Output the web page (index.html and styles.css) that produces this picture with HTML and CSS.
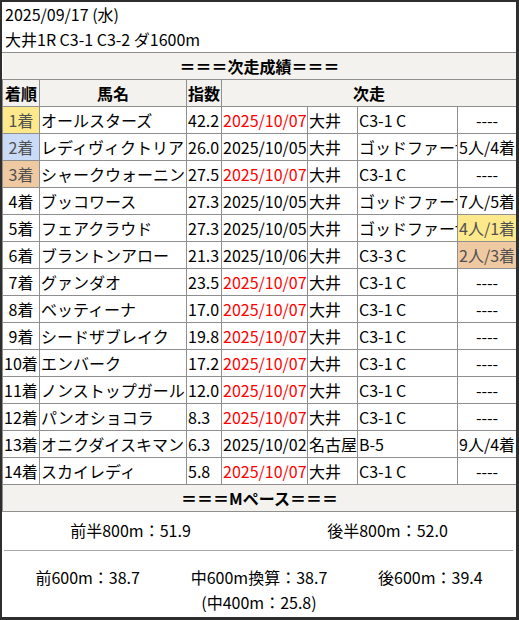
FILE: index.html
```html
<!DOCTYPE html>
<html lang="ja">
<head>
<meta charset="utf-8">
<link rel="stylesheet" href="styles.css">
</head>
<body>
<div class="frame">
  <div class="head">
    <div>2025/09/17 (水)</div>
    <div>大井1R C3-1 C3-2 ダ1600m</div>
  </div>
  <table class="res">
    <colgroup>
      <col class="c1"><col class="c2"><col class="c3"><col class="c4"><col class="c5"><col class="c6"><col class="c7">
    </colgroup>
    <tr><th colspan="7" class="sect">＝＝＝次走成績＝＝＝</th></tr>
    <tr><th>着順</th><th>馬名</th><th>指数</th><th colspan="4">次走</th></tr>
    <tr><td class="pos gold">1着</td><td>オールスターズ</td><td>42.2</td><td class="red">2025/10/07</td><td>大井</td><td>C3-1 C</td><td class="r">----</td></tr>
    <tr><td class="pos silver">2着</td><td>レディヴィクトリア</td><td>26.0</td><td>2025/10/05</td><td>大井</td><td>ゴッドファーザー</td><td class="r">5人/4着</td></tr>
    <tr><td class="pos bronze">3着</td><td>シャークウォーニング</td><td>27.5</td><td class="red">2025/10/07</td><td>大井</td><td>C3-1 C</td><td class="r">----</td></tr>
    <tr><td class="pos">4着</td><td>ブッコワース</td><td>27.3</td><td>2025/10/05</td><td>大井</td><td>ゴッドファーザー</td><td class="r">7人/5着</td></tr>
    <tr><td class="pos">5着</td><td>フェアクラウド</td><td>27.3</td><td>2025/10/05</td><td>大井</td><td>ゴッドファーザー</td><td class="r gold">4人/1着</td></tr>
    <tr><td class="pos">6着</td><td>ブラントンアロー</td><td>21.3</td><td>2025/10/06</td><td>大井</td><td>C3-3 C</td><td class="r bronze">2人/3着</td></tr>
    <tr><td class="pos">7着</td><td>グァンダオ</td><td>23.5</td><td class="red">2025/10/07</td><td>大井</td><td>C3-1 C</td><td class="r">----</td></tr>
    <tr><td class="pos">8着</td><td>ベッティーナ</td><td>17.0</td><td class="red">2025/10/07</td><td>大井</td><td>C3-1 C</td><td class="r">----</td></tr>
    <tr><td class="pos">9着</td><td>シードザブレイク</td><td>19.8</td><td class="red">2025/10/07</td><td>大井</td><td>C3-1 C</td><td class="r">----</td></tr>
    <tr><td class="pos">10着</td><td>エンバーク</td><td>17.2</td><td class="red">2025/10/07</td><td>大井</td><td>C3-1 C</td><td class="r">----</td></tr>
    <tr><td class="pos">11着</td><td>ノンストップガール</td><td>12.0</td><td class="red">2025/10/07</td><td>大井</td><td>C3-1 C</td><td class="r">----</td></tr>
    <tr><td class="pos">12着</td><td>パンオショコラ</td><td>8.3</td><td class="red">2025/10/07</td><td>大井</td><td>C3-1 C</td><td class="r">----</td></tr>
    <tr><td class="pos">13着</td><td>オニクダイスキマン</td><td>6.3</td><td>2025/10/02</td><td>名古屋</td><td>B-5</td><td class="r">9人/4着</td></tr>
    <tr><td class="pos">14着</td><td>スカイレディ</td><td>5.8</td><td class="red">2025/10/07</td><td>大井</td><td>C3-1 C</td><td class="r">----</td></tr>
    <tr><th colspan="7" class="sect">＝＝＝Mペース＝＝＝</th></tr>
  </table>
  <div class="halves">
    <div class="cell">前半800m：51.9</div>
    <div class="cell">後半800m：52.0</div>
  </div>
  <div class="sep"></div>
  <div class="thirds">
    <div class="cell">前600m：38.7</div>
    <div class="cell">中600m換算：38.7<br>(中400m：25.8)</div>
    <div class="cell">後600m：39.4</div>
  </div>
</div>
</body>
</html>
```

FILE: styles.css
```css
html, body {
  margin: 0;
  padding: 0;
  background: #ffffff;
}
body {
  font-family: "Noto Sans CJK JP", "Noto Sans", sans-serif;
  font-size: 16px;
  color: #000;
}
.frame {
  width: 514px;
  height: 615px;
  border-style: solid;
  border-color: #2e2e2e;
  border-width: 2px 3px 3px 2px;
  background: #fff;
  overflow: hidden;
}
.head {
  padding-left: 3px;
  line-height: 25px;
  height: 50px;
}
.res {
  width: 514px;
  border-collapse: collapse;
  table-layout: fixed;
}
.c1 { width: 37px; }
.c2 { width: 147px; }
.c3 { width: 35px; }
.c4 { width: 86px; }
.c5 { width: 50px; }
.c6 { width: 100px; }
.c7 { width: 59px; }
.res th, .res td {
  border: 1px solid #8f8f8f;
  padding: 1px 1px;
  height: 24px;
  line-height: 24px;
  white-space: nowrap;
  overflow: hidden;
  text-align: left;
  font-weight: normal;
}
.res tr:first-child th { border-left-color: transparent; border-right-color: transparent; }
.res th {
  background: #f3f2ee;
  font-weight: bold;
  text-align: center;
}
.res td.pos { text-align: center; }
.res td.r { text-align: center; }
.red { color: #ff0000; }
.gold { background: #fde98c; color: #505050; }
.silver { background: #c9dbf7; color: #505050; }
.bronze { background: #efc9a2; color: #505050; }
.halves {
  display: grid;
  grid-template-columns: 1fr 1fr;
  padding: 6px 0 8px;
  line-height: 24px;
}
.cell { text-align: center; }
.sep {
  height: 1px;
  background: #a8a8a8;
  margin: 0 3px 0 2px;
}
.thirds {
  display: grid;
  grid-template-columns: 1fr 1fr 1fr;
  padding-top: 14px;
  line-height: 24.5px;
}
```
